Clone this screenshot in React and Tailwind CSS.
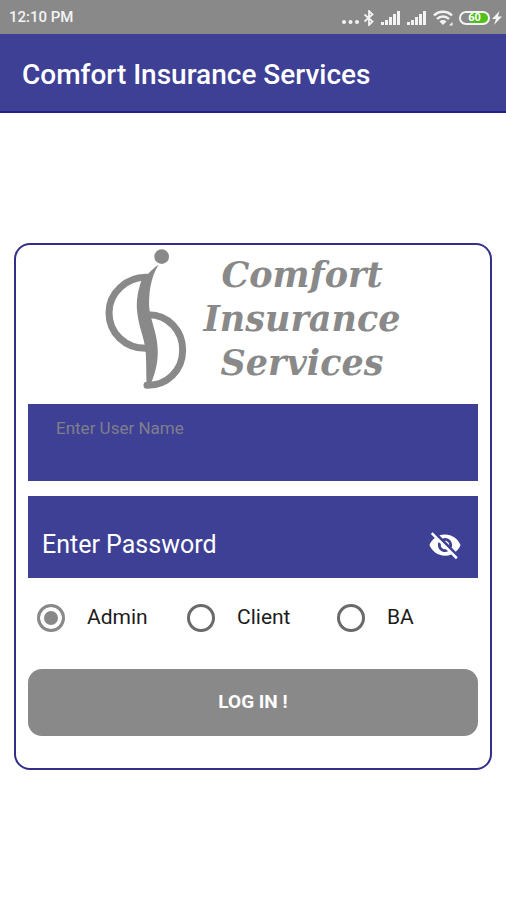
import React, { useState } from "react";

const ROLES = ["Admin", "Client", "BA"];

function SignalIcon() {
  return (
    <svg viewBox="0 0 20 14" className="h-[14px] w-5" fill="#f3f3f3" aria-hidden="true">
      <rect x="0" y="11" width="3" height="3" />
      <rect x="4" y="9" width="3" height="5" />
      <rect x="8" y="6" width="3" height="8" />
      <rect x="12" y="3" width="3" height="11" />
      <rect x="16" y="0" width="3" height="14" />
    </svg>
  );
}

function StatusBar() {
  return (
    <div className="flex h-[34px] items-center justify-between bg-[#898989] pl-[9px] pr-1 pt-px text-white">
      <span className="text-[15px] font-medium text-[#f3f3f3]">12:10 PM</span>

      <div className="flex items-center gap-[6px]">
        <div className="flex items-center gap-1">
          <svg viewBox="0 0 17 14" className="h-[14px] w-[17px]" fill="#f3f3f3" aria-hidden="true">
            <circle cx="2" cy="11" r="2" />
            <circle cx="8.5" cy="11" r="2" />
            <circle cx="15" cy="11" r="2" />
          </svg>
          <svg
            viewBox="0 0 12 16"
            className="h-4 w-3"
            fill="none"
            stroke="#f3f3f3"
            strokeWidth="1.8"
            aria-hidden="true"
          >
            <path d="M1.500 4.500 9.500 11.500 6 15V1L9.500 4.500 1.500 11.500" />
          </svg>
        </div>
        <SignalIcon />
        <SignalIcon />
        <svg viewBox="0 0 20 16" className="h-4 w-5" fill="none" stroke="#f3f3f3" aria-hidden="true">
          <path d="M1 5.5a12.6 12.6 0 0 1 18 0" strokeWidth="2.4" />
          <path d="M4 9a8.4 8.4 0 0 1 12 0" strokeWidth="2.4" />
          <path d="M6.5 11.5a5 5 0 0 1 7 0L10 15z" fill="#f3f3f3" stroke="none" />
          <path d="M19.5 12v3.500H16z" fill="#f3f3f3" stroke="none" />
        </svg>
        <div className="flex items-center gap-[2px]">
          <div className="flex h-[14px] w-[31px] items-center justify-center rounded-full border-2 border-[#f3f3f3] bg-linear-to-r from-[#898989] from-35% to-[#4fc01e] to-35% text-[11px] font-bold leading-none">
            60
          </div>
          <svg viewBox="0 0 10 14" className="h-[14px] w-[10px]" fill="#f3f3f3" aria-hidden="true">
            <path d="M7.5 0 0 8h4L2 14l8-8.5H6z" />
          </svg>
        </div>
      </div>
    </div>
  );
}

function Logo() {
  return (
    <div className="flex items-start justify-center gap-4 pt-1">
      <svg viewBox="42 27 246 423" className="h-[141px] w-[82px]" aria-hidden="true">
        <g fill="none" stroke="#898989" strokeWidth="21">
          <path d="M168 112C108 110 54 158 54 218C54 280 104 326 166 325" />
          <path d="M172 224C232 224 275 272 275 330C275 392 228 437 168 436" strokeLinecap="round" />
        </g>
        <circle cx="212" cy="50" r="22" fill="#898989" />
        <path
          d="M203 74C186 84 178 96 168 103L158 106C142 140 134 182 139 220C144 262 158 290 163 325C167 366 165 402 167 430L179 432C194 398 202 362 200 326C198 282 182 248 176 214C170 168 180 106 203 74Z"
          fill="#898989"
        />
      </svg>
      <p className="pt-1 text-center font-['DejaVu_Serif',serif] text-[35px] font-bold italic leading-[44px] text-[#898989]">
        Comfort
        <br />
        Insurance
        <br />
        Services
      </p>
    </div>
  );
}

function EyeOffIcon() {
  return (
    <svg viewBox="0 0 24 24" className="h-[34px] w-[34px]" fill="currentColor" aria-hidden="true">
      <path d="M12 7c2.76 0 5 2.24 5 5 0 .65-.13 1.26-.36 1.83l2.92 2.92c1.51-1.26 2.7-2.89 3.43-4.75-1.73-4.39-6-7.5-11-7.5-1.4 0-2.74.25-3.98.7l2.16 2.16C10.74 7.13 11.35 7 12 7zM2 4.27l2.28 2.28.46.46C3.08 8.3 1.78 10.02 1 12c1.73 4.39 6 7.5 11 7.5 1.55 0 3.03-.3 4.38-.84l.42.42L19.73 22 21 20.73 3.27 3 2 4.27zM7.53 9.8l1.55 1.55c-.05.21-.08.43-.08.65 0 1.66 1.34 3 3 3 .22 0 .44-.03.65-.08l1.55 1.55c-.67.33-1.41.53-2.2.53-2.76 0-5-2.24-5-5 0-.79.2-1.53.53-2.2zm4.31-.78 3.15 3.15.02-.16c0-1.66-1.34-3-3-3l-.17.01z" />
    </svg>
  );
}

export default function App() {
  const [userName, setUserName] = useState("");
  const [password, setPassword] = useState("");
  const [showPassword, setShowPassword] = useState(false);
  const [role, setRole] = useState("Admin");

  return (
    <div className="min-h-screen bg-white font-[Roboto,sans-serif]">
      <StatusBar />

      <header className="flex h-[79px] items-center border-b-2 border-[#22208a] bg-[#3e4095] px-[22px]">
        <h1 className="pt-1 text-[28px] font-medium text-white">Comfort Insurance Services</h1>
      </header>

      <main className="px-[14px] pt-[130px]">
        <form
          onSubmit={(e) => e.preventDefault()}
          className="rounded-2xl border-2 border-[#332f88] px-3 pb-8"
        >
          <Logo />

          {/* User name */}
          <div className="mt-[14px] h-[77px] bg-[#3e4095] px-7 pt-3">
            <label htmlFor="userName" className="block text-[17px] leading-6 text-[#7f7f8b]">
              Enter User Name
            </label>
            <input
              id="userName"
              type="text"
              value={userName}
              onChange={(e) => setUserName(e.target.value)}
              className="block h-8 w-full bg-transparent text-xl text-white outline-none"
            />
          </div>

          {/* Password */}
          <div className="mt-[15px] flex h-[82px] items-center bg-[#3e4095] pl-[14px] pr-4 pt-4 text-white">
            <input
              id="password"
              type={showPassword ? "text" : "password"}
              aria-label="Enter Password"
              placeholder="Enter Password"
              value={password}
              onChange={(e) => setPassword(e.target.value)}
              className="min-w-0 flex-1 bg-transparent text-[25px] outline-none placeholder:text-white"
            />
            <button
              type="button"
              aria-label="Toggle password"
              onClick={() => setShowPassword(!showPassword)}
            >
              <EyeOffIcon />
            </button>
          </div>

          {/* Role */}
          <div className="mt-6 grid grid-cols-3">
            {ROLES.map((name) => (
              <label key={name} className="flex h-8 items-center gap-[22px] pl-[9px] text-[21px] text-[#1c1c1c]">
                <input
                  type="radio"
                  name="role"
                  value={name}
                  checked={role === name}
                  onChange={() => setRole(name)}
                  className="h-7 w-7 shrink-0 appearance-none rounded-full border-[3px] border-[#6a6a6a] checked:border-[#898989] checked:bg-[#898989] checked:shadow-[inset_0_0_0_4px_white]"
                />
                {name}
              </label>
            ))}
          </div>

          <button
            type="submit"
            className="mt-[35px] h-[67px] w-full rounded-[14px] bg-[#898989] text-[19px] font-bold text-white"
          >
            LOG IN !
          </button>
        </form>
      </main>
    </div>
  );
}
